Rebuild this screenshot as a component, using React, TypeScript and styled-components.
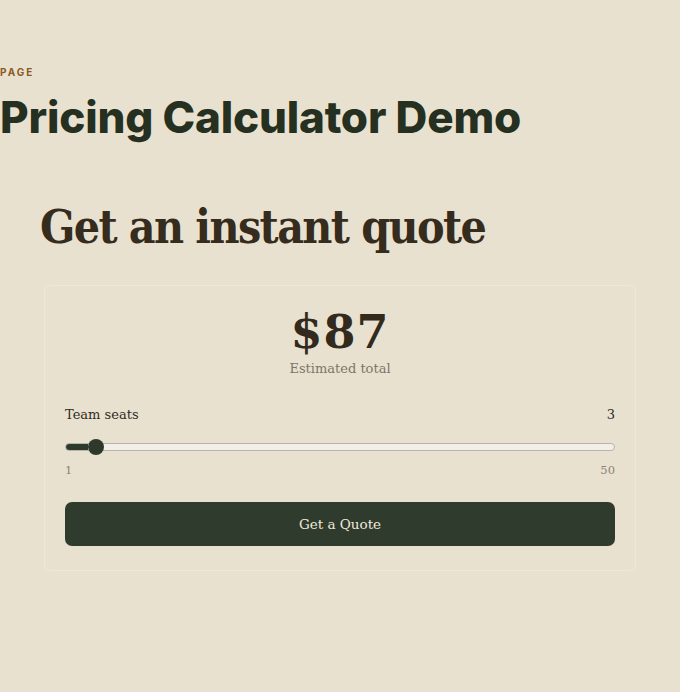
import React, { useState } from 'react';
import styled, { createGlobalStyle } from 'styled-components';

const GlobalStyle = createGlobalStyle`
  html, body {
    margin: 0;
    padding: 0;
    background: #e9e1cf;
  }
  body {
    font-family: "DejaVu Serif", "Liberation Serif", serif;
    color: #2f2a1f;
  }
`;

const Page = styled.div`
  min-height: 692px;
  padding-top: 66px;
  box-sizing: border-box;
`;

const Eyebrow = styled.div`
  font-family: Inter, "Liberation Sans", sans-serif;
  font-size: 10px;
  font-weight: 700;
  letter-spacing: 2px;
  color: #8a5a25;
  text-transform: uppercase;
`;

const Title = styled.h1`
  margin: 14px 0 0;
  font-family: Inter, "Liberation Sans", sans-serif;
  font-size: 44px;
  font-weight: 800;
  letter-spacing: -0.2px;
  line-height: 50px;
  color: #263020;
`;

const Section = styled.section`
  padding: 57px 44px 0 40px;
`;

const Heading = styled.h2`
  margin: 0;
  font-family: "DejaVu Serif Condensed", "DejaVu Serif", serif;
  font-stretch: condensed;
  font-size: 46px;
  font-weight: 700;
  letter-spacing: -1.6px;
  line-height: 56px;
  color: #352c1e;
`;

const Card = styled.div`
  margin: 30px 0 0 4px;
  padding: 19px 20px 24px;
  border: 1px solid #eee8da;
  border-radius: 6px;
  width: 592px;
  box-sizing: border-box;
`;

const Price = styled.div`
  text-align: center;
  font-family: "DejaVu Serif", serif;
  font-size: 46px;
  font-weight: 700;
  letter-spacing: 1px;
  line-height: 54px;
  color: #322a1d;
`;

const Caption = styled.div`
  text-align: center;
  font-size: 13px;
  color: #7c7667;
  margin-top: 2px;
`;

const Row = styled.div<{ muted?: boolean }>`
  display: flex;
  justify-content: space-between;
  align-items: baseline;
  font-size: ${(p) => (p.muted ? '11.5px' : '13px')};
  color: ${(p) => (p.muted ? '#8a8475' : '#2f2a1f')};
`;

const FieldRow = styled(Row)`
  margin-top: 31px;
`;

const Range = styled.input.attrs({ type: 'range' })`
  -webkit-appearance: none;
  appearance: none;
  width: 100%;
  height: 8px;
  margin: 21px 0 12px;
  border-radius: 4px;
  border: 1px solid #b9b4aa;
  box-sizing: border-box;
  outline: none;

  &::-webkit-slider-thumb {
    -webkit-appearance: none;
    width: 16px;
    height: 16px;
    border-radius: 50%;
    background: #2d3a2b;
    cursor: pointer;
  }
`;

const Button = styled.button`
  display: block;
  width: 100%;
  height: 44px;
  margin-top: 25px;
  border: none;
  border-radius: 7px;
  background: #2f3b2d;
  color: #f1ead9;
  font-family: "DejaVu Serif", serif;
  font-size: 13.5px;
  cursor: pointer;
`;

export default function App() {
  const [seats, setSeats] = useState(3);
  const pct = ((seats - 1) / 49) * 100;
  return (
    <Page>
      <GlobalStyle />
      <Eyebrow>Page</Eyebrow>
      <Title>Pricing Calculator Demo</Title>
      <Section>
        <Heading>Get an instant quote</Heading>
        <Card>
          <Price>${seats * 29}</Price>
          <Caption>Estimated total</Caption>
          <FieldRow>
            <span>Team seats</span>
            <span>{seats}</span>
          </FieldRow>
          <Range
            min={1}
            max={50}
            value={seats}
            onChange={(e) => setSeats(Number(e.target.value))}
            style={{
              background: `linear-gradient(to right, #2d3a2b ${pct}%, #f2efe9 ${pct}%)`,
            }}
          />
          <Row muted>
            <span>1</span>
            <span>50</span>
          </Row>
          <Button>Get a Quote</Button>
        </Card>
      </Section>
    </Page>
  );
}
